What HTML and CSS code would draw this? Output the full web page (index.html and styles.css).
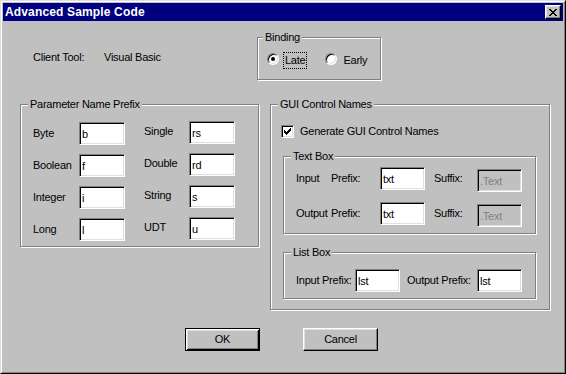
FILE: index.html
```html
<!DOCTYPE html>
<html lang="en">

<head>
  <meta charset="UTF-8">
  <title>Advanced Sample Code</title>
  <link rel="stylesheet" href="styles.css">
</head>

<body>
  <div class="window">
    <div class="frame">
      <!-- title bar -->
      <div class="titlebar">
        <span class="title">Advanced Sample Code</span>
        <button class="btn-close" type="button">
          <svg width="8" height="7" viewBox="0 0 8 7" shape-rendering="crispEdges">
            <path fill="#000" d="M0 0h2v1H0z M6 0h2v1H6z M1 1h2v1H1z M5 1h2v1H5z M2 2h4v1H2z M3 3h2v1H3z M2 4h4v1H2z M1 5h2v1H1z M5 5h2v1H5z M0 6h2v1H0z M6 6h2v1H6z" />
          </svg>
        </button>
      </div>

      <div class="content">
        <!-- client tool + binding -->
        <div class="top-row">
          <span class="client-label">Client Tool:</span>
          <span class="client-value">Visual Basic</span>
          <div class="group binding">
            <span class="legend">Binding</span>
            <div class="radios">
              <span class="radio checked"></span>
              <span class="radio-text focus">Late</span>
              <span class="radio early"></span>
              <span class="radio-text">Early</span>
            </div>
          </div>
        </div>

        <div class="mid-row">
          <!-- parameter name prefix -->
          <div class="group prefix">
            <span class="legend">Parameter Name Prefix</span>
            <div class="prefix-grid">
              <span>Byte</span><input class="field" type="text" value="b">
              <span>Single</span><input class="field up" type="text" value="rs">
              <span>Boolean</span><input class="field" type="text" value="f">
              <span>Double</span><input class="field up" type="text" value="rd">
              <span>Integer</span><input class="field" type="text" value="i">
              <span>String</span><input class="field up" type="text" value="s">
              <span>Long</span><input class="field" type="text" value="l">
              <span>UDT</span><input class="field up" type="text" value="u">
            </div>
          </div>

          <!-- gui control names -->
          <div class="group gui">
            <span class="legend">GUI Control Names</span>
            <label class="check-row">
              <span class="checkbox">
                <svg width="7" height="7" viewBox="0 0 7 7" shape-rendering="crispEdges">
                  <path fill="#000" d="M6 0h1v1H6z M5 1h2v1H5z M0 2h1v1H0z M4 2h3v1H4z M0 3h2v1H0z M3 3h3v1H3z M0 4h5v1H0z M1 5h3v1H1z M2 6h1v1H2z" />
                </svg>
              </span>
              <span>Generate GUI Control Names</span>
            </label>

            <div class="group textbox">
              <span class="legend">Text Box</span>
              <div class="textbox-grid">
                <span>Input</span><span>Prefix:</span><input class="field small" type="text" value="txt">
                <span>Suffix:</span><input class="field small disabled" type="text" value=".Text" disabled>
                <span>Output</span><span>Prefix:</span><input class="field small" type="text" value="txt">
                <span>Suffix:</span><input class="field small disabled" type="text" value=".Text" disabled>
              </div>
            </div>

            <div class="group listbox">
              <span class="legend">List Box</span>
              <div class="listbox-row">
                <span class="lb-input">Input Prefix:</span><input class="field small" type="text" value="lst">
                <span class="lb-output">Output Prefix:</span><input class="field small" type="text" value="lst">
              </div>
            </div>
          </div>
        </div>

        <!-- buttons -->
        <div class="buttons">
          <button class="btn default" type="button">OK</button>
          <button class="btn" type="button">Cancel</button>
        </div>
      </div>
    </div>
  </div>
</body>

</html>
```

FILE: styles.css
```css
html,
body {
  margin: 0;
  padding: 0;
}

body {
  font-family: "Liberation Sans", Arial, sans-serif;
  font-size: 11px;
  line-height: 13px;
  letter-spacing: -0.25px;
  color: #000;
  background: #c0c0c0;
}

/* window frame */
.window {
  width: 566px;
  height: 374px;
  box-sizing: border-box;
  border: 1px solid;
  border-color: #dfdfdf #000 #000 #dfdfdf;
}

.frame {
  height: 100%;
  box-sizing: border-box;
  border: 1px solid;
  border-color: #fff #808080 #808080 #fff;
  padding: 1px;
  background: #c0c0c0;
}

.titlebar {
  height: 18px;
  display: flex;
  align-items: center;
  justify-content: space-between;
  padding: 0 2px 0 2px;
  background: #000080;
}

.title {
  color: #fff;
  font-weight: bold;
  font-size: 12px;
  letter-spacing: 0.15px;
}

.btn-close {
  width: 16px;
  height: 14px;
  padding: 0;
  margin: 0;
  display: flex;
  align-items: center;
  justify-content: center;
  box-sizing: border-box;
  background: #c0c0c0;
  border: 1px solid;
  border-color: #fff #000 #000 #fff;
  box-shadow: inset -1px -1px #808080, inset 1px 1px #dfdfdf;
}

/* rows */
.top-row {
  display: flex;
  align-items: flex-start;
  margin-top: 16px;
  padding-left: 30px;
}

.client-label {
  width: 71px;
  margin-top: 14px;
}

.client-value {
  width: 153px;
  margin-top: 14px;
}

.mid-row {
  display: flex;
  align-items: flex-start;
  gap: 11px;
  margin-top: 24px;
  padding-left: 17px;
}

/* group box */
.group {
  position: relative;
  box-sizing: border-box;
  border: 1px solid #808080;
  box-shadow: inset 1px 1px #fff, 1px 1px #fff;
}

.group .legend {
  position: absolute;
  top: -7px;
  left: 7px;
  padding: 0 2px;
  background: #c0c0c0;
}

.binding {
  width: 124px;
  height: 43px;
}

.binding .legend {
  left: 5px;
}

.radios {
  display: flex;
  align-items: flex-start;
  padding: 14px 0 0 9px;
}

.radio {
  position: relative;
  width: 12px;
  height: 12px;
  margin-top: 1px;
  box-sizing: border-box;
  border-radius: 50%;
  background: #fff;
  border: 1px solid;
  border-color: #808080 #fff #fff #808080;
  box-shadow: inset 1px 1px #000, inset -1px -1px #dfdfdf;
}

.radio.checked::after {
  content: "";
  position: absolute;
  top: 3px;
  left: 3px;
  width: 4px;
  height: 4px;
  border-radius: 50%;
  background: #000;
}

.radio-text {
  margin-left: 4px;
  padding: 1px 1px;
  border: 1px solid transparent;
}

.radio-text.focus {
  border: 1px dotted #000;
}

.radio.early {
  margin-left: 18px;
}

/* parameter prefix */
.prefix {
  width: 239px;
  height: 143px;
}

.prefix-grid {
  display: grid;
  grid-template-columns: 46px 46px 45px 46px;
  column-gap: 0;
  grid-auto-rows: 23px;
  row-gap: 9px;
  align-items: center;
  padding: 17px 0 0 12px;
}

.prefix-grid span:nth-child(4n + 3) {
  margin-left: 19px;
  position: relative;
  top: -2px;
}

.prefix-grid .up {
  position: relative;
  top: -1px;
  margin-left: 19px;
}

/* text field */
.field {
  width: 46px;
  height: 23px;
  margin: 0;
  padding: 0 2px;
  box-sizing: border-box;
  font: inherit;
  letter-spacing: inherit;
  color: #000;
  background: #fff;
  border: 1px solid;
  border-color: #808080 #fff #fff #808080;
  box-shadow: inset 1px 1px #000, inset -1px -1px #dfdfdf;
  outline: none;
}

.field.small {
  width: 45px;
}

.field.disabled {
  background: #c0c0c0;
  color: #808080;
}

/* gui control names */
.gui {
  width: 280px;
  height: 206px;
  padding: 20px 0 0 12px;
}

.check-row {
  display: flex;
  align-items: center;
  margin-left: -2px;
}

.checkbox {
  width: 13px;
  height: 13px;
  margin-right: 6px;
  box-sizing: border-box;
  display: flex;
  align-items: center;
  justify-content: center;
  background: #fff;
  border: 1px solid;
  border-color: #808080 #fff #fff #808080;
  box-shadow: inset 1px 1px #000, inset -1px -1px #dfdfdf;
}

.textbox {
  width: 253px;
  height: 78px;
  margin-top: 18px;
}

.textbox-grid {
  display: grid;
  grid-template-columns: 35px 49px 45px 43px 45px;
  grid-auto-rows: 23px;
  row-gap: 12px;
  align-items: center;
  padding: 10px 0 0 12px;
}

.textbox-grid span:nth-child(5n + 4) {
  margin-left: 9px;
}

.textbox-grid .disabled {
  margin-left: 9px;
  position: relative;
  top: 2px;
}

.listbox {
  width: 253px;
  height: 47px;
  margin-top: 18px;
}

.listbox-row {
  display: flex;
  align-items: center;
  padding: 16px 0 0 12px;
}

.lb-input {
  width: 59px;
}

.lb-output {
  width: 70px;
  margin-left: 7px;
}

/* buttons */
.buttons {
  display: flex;
  gap: 43px;
  margin-top: 18px;
  padding-left: 182px;
}

.btn {
  width: 75px;
  height: 23px;
  padding: 0;
  box-sizing: border-box;
  font: inherit;
  letter-spacing: inherit;
  background: #c0c0c0;
  border: 1px solid;
  border-color: #fff #000 #000 #fff;
  box-shadow: inset -1px -1px #808080, inset 1px 1px #dfdfdf;
}

.btn.default {
  border: 1px solid #000;
  box-shadow: inset 1px 1px #fff, inset -1px -1px #000, inset 2px 2px #dfdfdf, inset -2px -2px #808080;
}
```
